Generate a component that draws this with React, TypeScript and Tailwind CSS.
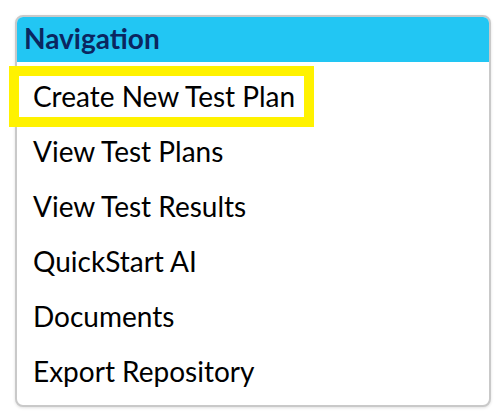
const items = [
  "Create New Test Plan",
  "View Test Plans",
  "View Test Results",
  "QuickStart AI",
  "Documents",
  "Export Repository",
];

export default function App() {
  return (
    <div
      className="min-h-screen bg-white pt-[15px] pl-[15px]"
      style={{ fontFamily: "Lato, 'Liberation Sans', sans-serif" }}
    >
      <div className="w-[476px] h-[392px] rounded-lg border-2 border-[#c9c9c9] bg-white shadow-[0_1px_3px_rgba(0,0,0,0.12)]">
        <div className="h-[45px] rounded-t-[6px] bg-[#22c6f3] pl-[7px] pt-[5px]">
          <h2 className="text-[28px] font-bold leading-[1.2] text-[#0b2660]">Navigation</h2>
        </div>
        <ul className="pt-[7px]">
          {items.map((item, i) => (
            <li key={item} className="h-[55px] flex items-center pl-[2px]">
              <a
                href="#"
                className={
                  "pl-[14px] pr-[9px] py-[4px] text-[28px] leading-[1.2] text-black " +
                  (i === 0 ? "outline-[10px] outline-solid outline-[#fff200]" : "")
                }
              >
                {item}
              </a>
            </li>
          ))}
        </ul>
      </div>
    </div>
  );
}
